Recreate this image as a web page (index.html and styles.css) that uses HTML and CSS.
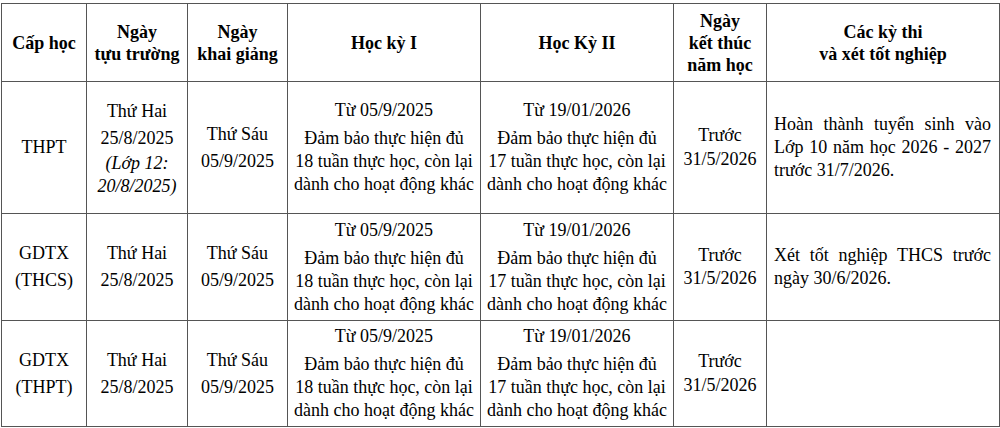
FILE: index.html
```html
<!DOCTYPE html>
<html lang="vi">
<head>
<meta charset="utf-8">
<title>Khung thời gian năm học</title>
<link rel="stylesheet" href="styles.css">
</head>
<body>
<table class="plan">
  <colgroup>
    <col class="c1"><col class="c2"><col class="c3"><col class="c4"><col class="c5"><col class="c6"><col class="c7">
  </colgroup>
  <thead>
    <tr class="r-head">
      <th>Cấp học</th>
      <th>Ngày<br>tựu trường</th>
      <th>Ngày<br>khai giảng</th>
      <th>Học kỳ I</th>
      <th>Học Kỳ II</th>
      <th>Ngày<br>kết thúc<br>năm học</th>
      <th>Các kỳ thi<br>và xét tốt nghiệp</th>
    </tr>
  </thead>
  <tbody>
    <tr class="r1">
      <td class="tall">THPT</td>
      <td><div class="tall">Thứ Hai<br>25/8/2025</div><div class="note">(Lớp 12:<br>20/8/2025)</div></td>
      <td class="tall">Thứ Sáu<br>05/9/2025</td>
      <td><div class="from">Từ 05/9/2025</div><div class="desc">Đảm bảo thực hiện đủ<br>18 tuần thực học, còn lại<br>dành cho hoạt động khác</div></td>
      <td><div class="from">Từ 19/01/2026</div><div class="desc">Đảm bảo thực hiện đủ<br>17 tuần thực học, còn lại<br>dành cho hoạt động khác</div></td>
      <td class="end">Trước<br>31/5/2026</td>
      <td class="exam">Hoàn thành tuyển sinh vào Lớp 10 năm học 2026 - 2027 trước 31/7/2026.</td>
    </tr>
    <tr class="r2">
      <td class="tall">GDTX<br>(THCS)</td>
      <td class="tall">Thứ Hai<br>25/8/2025</td>
      <td class="tall">Thứ Sáu<br>05/9/2025</td>
      <td><div class="from">Từ 05/9/2025</div><div class="desc">Đảm bảo thực hiện đủ<br>18 tuần thực học, còn lại<br>dành cho hoạt động khác</div></td>
      <td><div class="from">Từ 19/01/2026</div><div class="desc">Đảm bảo thực hiện đủ<br>17 tuần thực học, còn lại<br>dành cho hoạt động khác</div></td>
      <td class="end">Trước<br>31/5/2026</td>
      <td class="exam">Xét tốt nghiệp THCS trước ngày 30/6/2026.</td>
    </tr>
    <tr class="r3">
      <td class="tall">GDTX<br>(THPT)</td>
      <td class="tall">Thứ Hai<br>25/8/2025</td>
      <td class="tall">Thứ Sáu<br>05/9/2025</td>
      <td><div class="from">Từ 05/9/2025</div><div class="desc">Đảm bảo thực hiện đủ<br>18 tuần thực học, còn lại<br>dành cho hoạt động khác</div></td>
      <td><div class="from">Từ 19/01/2026</div><div class="desc">Đảm bảo thực hiện đủ<br>17 tuần thực học, còn lại<br>dành cho hoạt động khác</div></td>
      <td class="end">Trước<br>31/5/2026</td>
      <td class="exam"></td>
    </tr>
  </tbody>
</table>
</body>
</html>
```
FILE: styles.css
```css
html, body {
  margin: 0;
  padding: 0;
  background: #ffffff;
}

body {
  padding: 3px 0 0 1px;
  font-family: "Liberation Serif", "Times New Roman", serif;
  font-size: 18px;
  color: #000000;
}

.plan {
  border-collapse: collapse;
  table-layout: fixed;
  width: 998px;
}

.c1 { width: 85px; }
.c2 { width: 101px; }
.c3 { width: 100px; }
.c4 { width: 193px; }
.c5 { width: 193px; }
.c6 { width: 93px; }
.c7 { width: 233px; }

.plan th,
.plan td {
  border: 1px solid #555555;
  padding: 0;
  text-align: center;
  vertical-align: middle;
  white-space: nowrap;
}

.plan th {
  font-weight: bold;
  line-height: 22px;
}

.r-head { height: 78px; }
.r1 { height: 132px; }
.r2 { height: 107px; }
.r3 { height: 106px; }

.tall {
  line-height: 27px;
}

.note {
  font-style: italic;
  line-height: 23px;
}

.from {
  line-height: 23px;
  margin-bottom: 5px;
}

.desc {
  line-height: 23px;
}

.end {
  line-height: 23.5px;
}

.plan td.exam {
  text-align: justify;
  white-space: normal;
  line-height: 23px;
  padding: 0 8px 0 7px;
}
```
